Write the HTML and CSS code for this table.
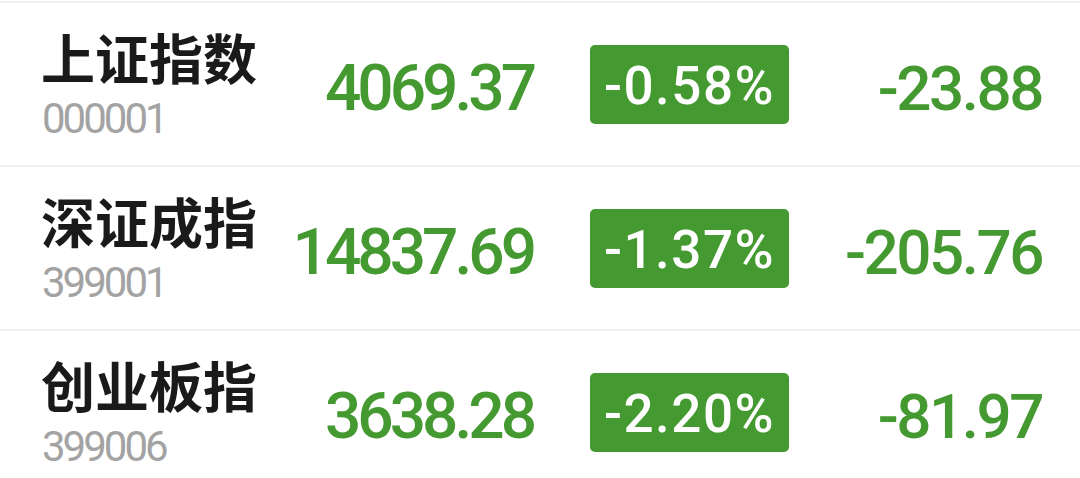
FILE: index.html
```html
<!DOCTYPE html>
<html lang="zh-CN">
<head>
<meta charset="utf-8">
<link rel="stylesheet" href="styles.css">
</head>
<body>
<div class="list">
  <div class="row">
    <div class="name-block">
      <div class="name">上证指数</div>
      <div class="code">000001</div>
    </div>
    <div class="price">4069.37</div>
    <div class="badge">-0.58%</div>
    <div class="change">-23.88</div>
  </div>
  <div class="row">
    <div class="name-block">
      <div class="name">深证成指</div>
      <div class="code">399001</div>
    </div>
    <div class="price">14837.69</div>
    <div class="badge">-1.37%</div>
    <div class="change">-205.76</div>
  </div>
  <div class="row">
    <div class="name-block">
      <div class="name">创业板指</div>
      <div class="code">399006</div>
    </div>
    <div class="price">3638.28</div>
    <div class="badge">-2.20%</div>
    <div class="change">-81.97</div>
  </div>
</div>
</body>
</html>
```
FILE: styles.css
```css
html, body {
  margin: 0;
  padding: 0;
  background: #ffffff;
  overflow: hidden;
}
.list {
  padding-top: 1px;
  width: 1080px;
}
.row {
  box-sizing: border-box;
  height: 164px;
  border-top: 2px solid #efefef;
  display: grid;
  grid-template-columns: 240px 252px 57px 199px 1fr;
  padding: 0 39px 0 41px;
  align-items: center;
}
.name-block {
  grid-column: 1;
  display: flex;
  flex-direction: column;
}
.name {
  font-family: "Noto Sans CJK SC", sans-serif;
  font-weight: 700;
  font-size: 54px;
  line-height: 60px;
  color: #1a1a1a;
  margin-bottom: 10px;
}
.code {
  font-family: Roboto, sans-serif;
  font-weight: 400;
  font-size: 42px;
  line-height: 44px;
  letter-spacing: -3px;
  color: #a3a3a3;
  margin-left: 1px;
}
.price {
  grid-column: 2;
  text-align: right;
  font-family: Roboto, sans-serif;
  font-weight: 500;
  font-size: 64px;
  letter-spacing: -4px;
  color: #449a30;
  margin-top: 8px;
  margin-right: 0;
}
.badge {
  grid-column: 4;
  height: 79px;
  box-sizing: border-box;
  background: #449a30;
  border-radius: 5px;
  color: #ffffff;
  font-family: Roboto, sans-serif;
  font-weight: 500;
  font-size: 53px;
  line-height: 83px;
  text-align: center;
  letter-spacing: 1.5px;
}
.change {
  grid-column: 5;
  text-align: right;
  font-family: Roboto, sans-serif;
  font-weight: 500;
  font-size: 62px;
  letter-spacing: -2.5px;
  color: #449a30;
  margin-top: 8px;
  margin-right: -1px;
}
```
